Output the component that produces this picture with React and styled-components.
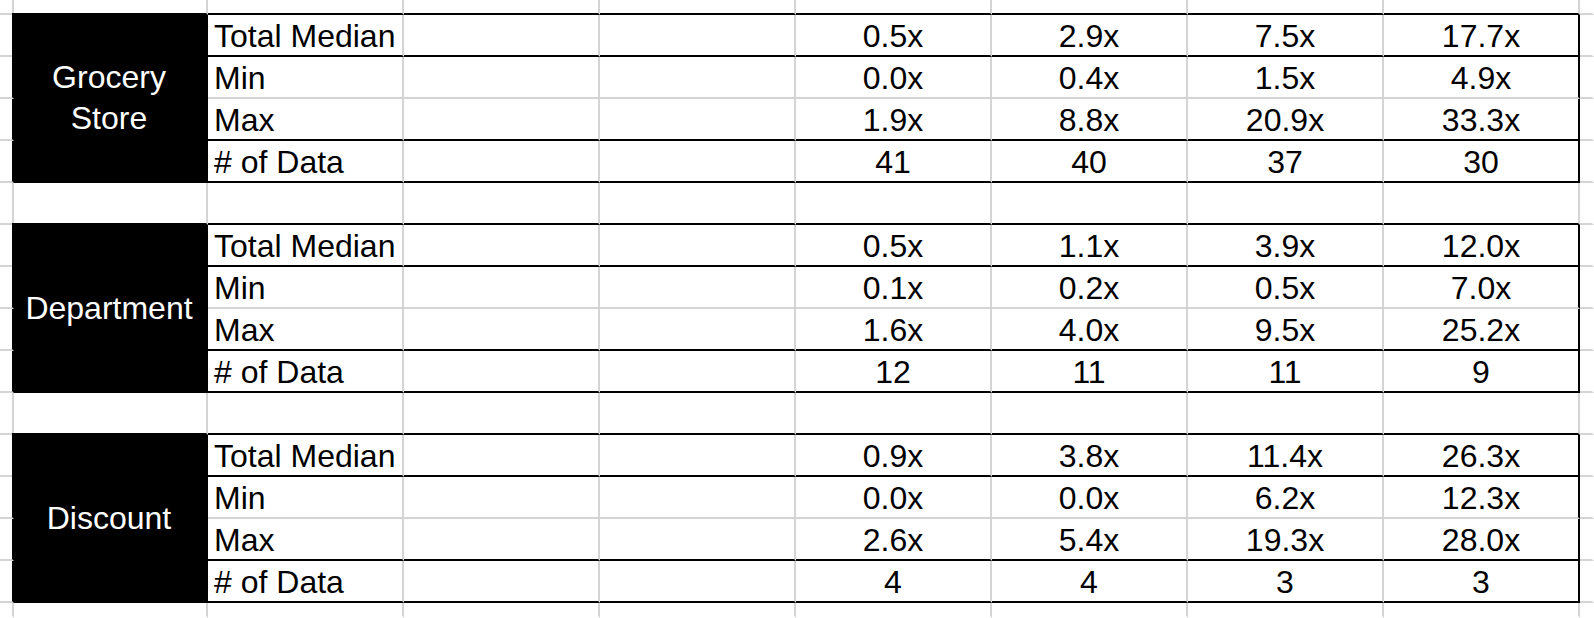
import React from 'react';
import styled, { createGlobalStyle } from 'styled-components';

const GRID = '#d4d4d4';
const INK = '#000';

const blocks = [
  {
    name: ['Grocery', 'Store'],
    start: 1,
    rows: [
      ['Total Median', '0.5x', '2.9x', '7.5x', '17.7x'],
      ['Min', '0.0x', '0.4x', '1.5x', '4.9x'],
      ['Max', '1.9x', '8.8x', '20.9x', '33.3x'],
      ['# of Data', '41', '40', '37', '30'],
    ],
  },
  {
    name: ['Department'],
    start: 6,
    rows: [
      ['Total Median', '0.5x', '1.1x', '3.9x', '12.0x'],
      ['Min', '0.1x', '0.2x', '0.5x', '7.0x'],
      ['Max', '1.6x', '4.0x', '9.5x', '25.2x'],
      ['# of Data', '12', '11', '11', '9'],
    ],
  },
  {
    name: ['Discount'],
    start: 11,
    rows: [
      ['Total Median', '0.9x', '3.8x', '11.4x', '26.3x'],
      ['Min', '0.0x', '0.0x', '6.2x', '12.3x'],
      ['Max', '2.6x', '5.4x', '19.3x', '28.0x'],
      ['# of Data', '4', '4', '3', '3'],
    ],
  },
];

const ROWS = 16;
const COLS = 10;

const GlobalStyle = createGlobalStyle`
  html, body {
    margin: 0;
    padding: 0;
    background: #fff;
    overflow: hidden;
  }
`;

const Sheet = styled.div`
  display: grid;
  grid-template-columns: 12px repeat(8, 196px) 1fr;
  grid-template-rows: 15px repeat(14, 42px) 1fr;
  height: 100vh;
  font-family: 'Liberation Sans', Arial, sans-serif;
  font-size: 32px;
  color: #000;
`;

const Cell = styled.div`
  box-sizing: border-box;
  display: flex;
  align-items: center;
  justify-content: ${(p) => (p.$center ? 'center' : 'flex-start')};
  padding: 2px 6px 0 6px;
  min-width: 0;
  white-space: nowrap;
  border-right: 2px solid ${(p) => p.$right};
  border-bottom: 2px solid ${(p) => p.$bottom};
`;

const NameCell = styled(Cell)`
  grid-row: span 4;
  padding: 0 4px;
  background: #000;
  color: #fff;
  text-align: center;
  white-space: normal;
  line-height: 41px;
`;

function buildCells() {
  const out = [];
  for (let r = 0; r < ROWS; r++) {
    const block = blocks.find((b) => r >= b.start && r < b.start + 4);
    const below = blocks.find((b) => r === b.start - 1);

    for (let c = 0; c < COLS; c++) {
      const key = `${r}-${c}`;
      let right = c === COLS - 1 ? 'transparent' : GRID;
      let bottom = r === ROWS - 1 ? 'transparent' : GRID;

      if (below && c >= 1 && c <= 8) bottom = INK;

      if (!block) {
        out.push(<Cell key={key} $right={right} $bottom={bottom} />);
        continue;
      }

      const k = r - block.start;
      const row = block.rows[k];

      if (c === 1) {
        if (k === 0) {
          out.push(
            <NameCell key={key} $center $right={INK} $bottom={INK}>
              <span>
                {block.name.map((word, i) => (
                  <React.Fragment key={word}>
                    {i > 0 && <br />}
                    {word}
                  </React.Fragment>
                ))}
              </span>
            </NameCell>
          );
        }
        continue;
      }

      if (c === 0) right = INK;
      if (c >= 2 && c <= 8) {
        bottom = k === 1 ? GRID : INK;
        if (c === 8) right = INK;
      }

      let text = null;
      if (c === 2) text = row[0];
      if (c >= 5 && c <= 8) text = row[c - 4];

      out.push(
        <Cell key={key} $center={c >= 5} $right={right} $bottom={bottom}>
          {text}
        </Cell>
      );
    }
  }
  return out;
}

const App = () => (
  <>
    <GlobalStyle />
    <Sheet>{buildCells()}</Sheet>
  </>
);

export default App;
